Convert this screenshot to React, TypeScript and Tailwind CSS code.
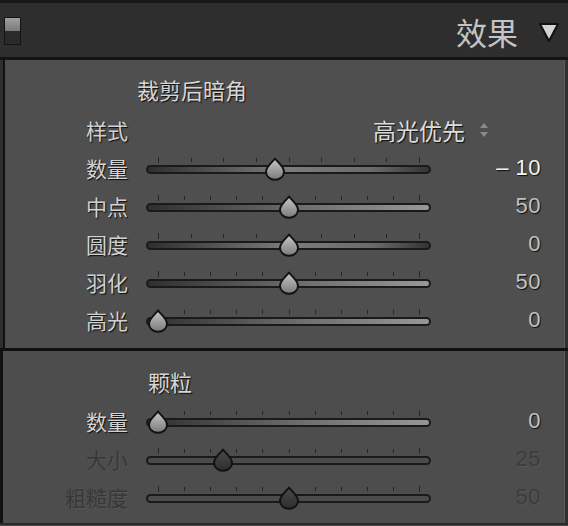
import React from 'react'

const CJK = "font-['Noto_Sans_CJK_SC','Noto_Sans',sans-serif]"
const NUM = "font-['Liberation_Sans','Noto_Sans_CJK_SC',sans-serif]"
const SHADOW = '[text-shadow:1px_1px_1px_rgba(0,0,0,0.85)]'
const DIM_SHADOW = '[text-shadow:1px_1px_0_rgba(255,255,255,0.06)]'

type Row = {
  label: string
  value: string
  pos: number
  ticks: number
  bipolar?: boolean
  disabled?: boolean
  bright?: boolean
}

const VIGNETTE: Row[] = [
  { label: '数量', value: '– 10', pos: 0.45, ticks: 9, bipolar: true, bright: true },
  { label: '中点', value: '50', pos: 0.5, ticks: 11 },
  { label: '圆度', value: '0', pos: 0.5, ticks: 9, bipolar: true },
  { label: '羽化', value: '50', pos: 0.5, ticks: 11 },
  { label: '高光', value: '0', pos: 0, ticks: 11 },
]

const GRAIN: Row[] = [
  { label: '数量', value: '0', pos: 0, ticks: 11 },
  { label: '大小', value: '25', pos: 0.25, ticks: 11, disabled: true },
  { label: '粗糙度', value: '50', pos: 0.5, ticks: 11, disabled: true },
]

function Thumb({ disabled, id }: { disabled?: boolean; id: string }) {
  return (
    <svg width="24" height="24" viewBox="0 0 24 24">
      <defs>
        <linearGradient id={id} x1="0" y1="0" x2="0" y2="1">
          <stop offset="0" stopColor={disabled ? '#4a4a4a' : '#c8c8c8'} />
          <stop offset="1" stopColor={disabled ? '#2e2e2e' : '#7a7a7a'} />
        </linearGradient>
      </defs>
      <path
        d="M12 1.5 C14.4 5.2 21 9.2 21 15 A9 7.8 0 0 1 3 15 C3 9.2 9.6 5.2 12 1.5 Z"
        fill={`url(#${id})`}
        stroke="#121212"
        strokeWidth="2"
        strokeLinejoin="round"
      />
    </svg>
  )
}

function Slider({ row, id }: { row: Row; id: string }) {
  // thumb centre runs from 12px to 273px inside the 285px track
  const left = 12 + row.pos * 261
  const fill = row.disabled
    ? 'bg-[#4b4b4b]'
    : row.bipolar
      ? 'bg-[linear-gradient(to_right,#2f2f2f,#7c7c7c_50%,#6a6a6a_80%,#333333)]'
      : 'bg-[linear-gradient(to_right,#2f2f2f,#6e6e6e_55%,#979797)]'
  return (
    <div className="relative w-[285px] h-[38px] shrink-0">
      {Array.from({ length: row.ticks }).map((_, i) => {
        const x = 12 + (i * 261) / (row.ticks - 1)
        const edge = i === 0 || i === row.ticks - 1
        return (
          <div
            key={i}
            className={`absolute w-px bg-[#262626] ${edge ? 'top-[8px] h-[6px]' : 'top-[9px] h-[4px]'}`}
            style={{ left: x }}
          />
        )
      })}
      <div className={`absolute left-0 right-0 top-[16px] h-[9px] rounded-full border-2 border-[#1a1a1a] ${fill}`} />
      <div className="absolute top-[8px]" style={{ left: left - 12 }}>
        <Thumb disabled={row.disabled} id={id} />
      </div>
    </div>
  )
}

function SliderRow({ row, id }: { row: Row; id: string }) {
  const labelColor = row.disabled ? `text-[#383838] ${DIM_SHADOW}` : `text-[#d2d2d2] ${SHADOW}`
  const valueColor = row.disabled
    ? `text-[#3c3c3c] ${DIM_SHADOW}`
    : row.bright
      ? `text-[#f4f4f4] ${SHADOW}`
      : `text-[#c2c2c2] ${SHADOW}`
  return (
    <div className="flex items-center h-[38px]">
      <div className={`w-[123px] text-right text-[21px] leading-none ${CJK} ${labelColor}`}>{row.label}</div>
      <div className="ml-[18px]">
        <Slider row={row} id={id} />
      </div>
      <div className={`w-[110px] text-right text-[22px] leading-none tracking-[0.5px] ${NUM} ${valueColor}`}>
        {row.value}
      </div>
    </div>
  )
}

export default function App() {
  return (
    <div className="w-[568px] h-[526px] bg-[#2f2f2f] flex flex-col overflow-hidden select-none">
      {/* top edge */}
      <div className="h-[3px] bg-[#181818] shrink-0" />

      {/* header */}
      <div className="h-[54px] shrink-0 flex items-center px-[4px] bg-[#2e2e2e]">
        <div className="w-[17px] h-[28px] border border-[#141414] flex flex-col mt-[1px]">
          <div className="h-1/2 bg-[linear-gradient(#a0a0a0,#7a7a7a)]" />
          <div className="h-1/2 bg-[#2a2a2a]" />
        </div>
        <div className={`ml-auto text-[31px] leading-none text-[#c4c4c4] mt-[3px] ${CJK}`}>效果</div>
        <svg width="22" height="22" viewBox="0 0 22 22" className="ml-[20px] mr-[4px] mt-[3px]">
          <polygon points="2,3 20,3 11,20" fill="#d4d4d4" stroke="#111" strokeWidth="2" strokeLinejoin="round" />
        </svg>
      </div>
      <div className="h-[3px] bg-[#141414] shrink-0" />

      {/* vignette section */}
      <div className="h-[288px] shrink-0 ml-[3px] mr-[3px] border-l-2 border-[#111] border-r border-r-[#5c5c5c] bg-[#4f4f4f] pt-[13px]">
        <div className={`h-[38px] flex items-center pb-[6px] pl-[132px] text-[22px] leading-none text-[#d6d6d6] ${SHADOW} ${CJK}`}>
          裁剪后暗角
        </div>
        <div className="flex items-center h-[38px]">
          <div className={`w-[123px] text-right text-[21px] leading-none text-[#d2d2d2] ${SHADOW} ${CJK}`}>样式</div>
          <div className={`ml-[245px] text-[23px] leading-none text-[#dcdcdc] ${SHADOW} ${CJK}`}>高光优先</div>
          <svg width="10" height="16" viewBox="0 0 10 16" className="ml-[14px]">
            <polygon points="5,1 9,6 1,6" fill="#8a8a8a" />
            <polygon points="1,10 9,10 5,15" fill="#8a8a8a" />
          </svg>
        </div>
        {VIGNETTE.map((r, i) => (
          <SliderRow key={r.label} row={r} id={`v${i}`} />
        ))}
      </div>

      <div className="h-[3px] bg-[#111] shrink-0" />

      {/* grain section */}
      <div className="h-[172px] shrink-0 mr-[3px] border-l-[3px] border-[#111] border-r border-r-[#5c5c5c] pl-[2px] bg-[#4d4d4d] pt-[13px]">
        <div className={`h-[38px] flex items-center pb-[4px] pl-[143px] text-[22px] leading-none text-[#d6d6d6] ${SHADOW} ${CJK}`}>
          颗粒
        </div>
        {GRAIN.map((r, i) => (
          <SliderRow key={r.label} row={r} id={`g${i}`} />
        ))}
      </div>

      <div className="h-[2px] bg-[#2a2a2a] shrink-0" />
      <div className="flex-1 bg-[#4a4a4a]" />
    </div>
  )
}
